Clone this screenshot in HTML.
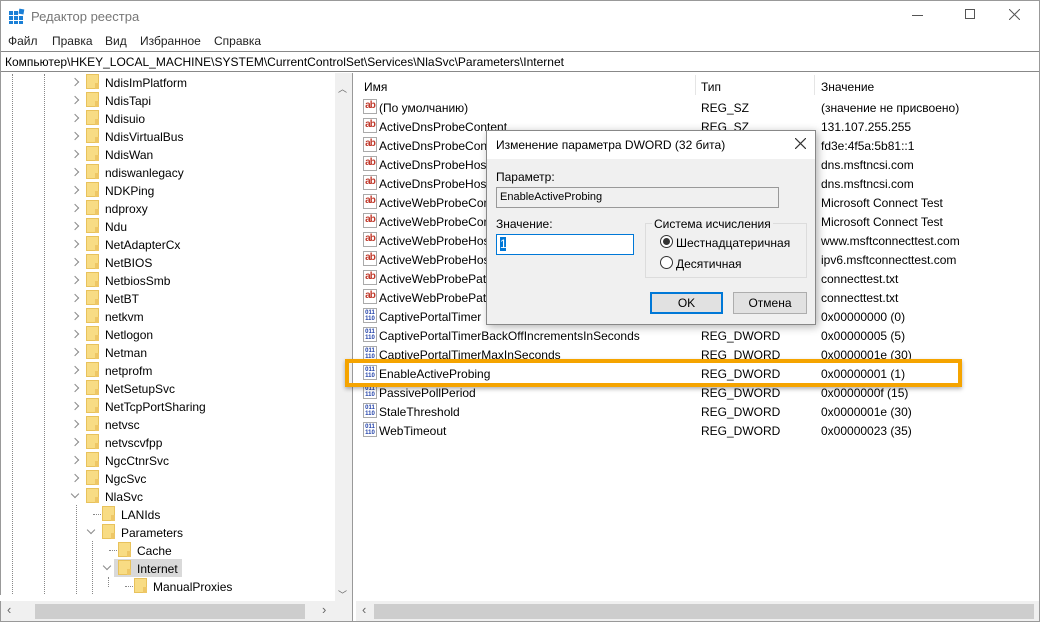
<!DOCTYPE html>
<html><head><meta charset="utf-8"><style>
*{margin:0;padding:0;box-sizing:border-box}
body{width:1040px;height:622px;overflow:hidden;background:#fff;font-family:"Liberation Sans",sans-serif;font-size:12px;color:#000;position:relative}
.a{position:absolute;white-space:nowrap}
.fold{position:absolute;width:13px;height:15px;background:#f8dc84;border:1px solid #e8c25c}
.fold:after{content:"";position:absolute;right:-1px;bottom:-1px;width:4px;height:6px;background:#eec766}
.chev{position:absolute;width:6px;height:6px;border-right:1.5px solid #8a8a8a;border-bottom:1.5px solid #8a8a8a}
.r{transform:rotate(-45deg)}
.d{transform:rotate(45deg)}
.vl{position:absolute;border-left:1px dotted #888;width:0}
.hl{position:absolute;border-top:1px dotted #888;height:0}
.ab{position:absolute;width:14px;height:15px;border:1px solid #aaa;background:#fff;color:#c0392b;font-size:10px;font-weight:bold;line-height:12px;text-align:center;letter-spacing:-1px}
.dw{position:absolute;width:14px;height:15px;border:1px solid #aaa;background:#fff;color:#1f3fa8;font-size:6px;font-weight:bold;line-height:6px;text-align:center;padding-top:1px}
</style></head><body>
<div class="a" style="left:0;top:0;width:1040px;height:622px;border:1px solid #999"></div>
<svg class="a" style="left:9px;top:8px" width="16" height="16"><g fill="#1a7fd6"><rect x="0" y="3" width="4" height="4"/><rect x="5" y="3" width="4" height="4"/><rect x="0" y="8" width="4" height="4"/><rect x="5" y="8" width="4" height="4"/><rect x="10" y="8" width="4" height="4"/><rect x="0" y="13" width="4" height="3"/><rect x="5" y="13" width="4" height="3"/><rect x="10" y="13" width="4" height="3"/><rect x="10" y="1" width="5" height="5" transform="rotate(10 12 3)"/></g></svg>
<div class="a" style="left:31px;top:9px;font-size:13px;color:#777">Редактор реестра</div>
<div class="a" style="left:912px;top:15px;width:11px;border-top:1px solid #555"></div>
<div class="a" style="left:965px;top:9px;width:10px;height:10px;border:1px solid #555"></div>
<svg class="a" style="left:1009px;top:9px" width="11" height="11"><path d="M0 0L11 11M11 0L0 11" stroke="#555" stroke-width="1"/></svg>
<div class="a" style="left:8px;top:34px;color:#222">Файл</div>
<div class="a" style="left:52px;top:34px;color:#222">Правка</div>
<div class="a" style="left:105px;top:34px;color:#222">Вид</div>
<div class="a" style="left:140px;top:34px;color:#222">Избранное</div>
<div class="a" style="left:214px;top:34px;color:#222">Справка</div>
<div class="a" style="left:1px;top:51px;width:1038px;height:21px;border:1px solid #888;border-left:none;border-right:none;background:#fff"></div>
<div class="a" style="left:5px;top:55px">Компьютер\HKEY_LOCAL_MACHINE\SYSTEM\CurrentControlSet\Services\NlaSvc\Parameters\Internet</div>
<div class="a" style="left:1px;top:73px;width:352px;height:548px;border-right:1px solid #999"></div>
<div class="a" style="left:114px;top:559px;width:68px;height:18px;background:#d9d9d9"></div>
<div class="vl" style="left:12px;top:74px;height:528px"></div>
<div class="vl" style="left:44px;top:74px;height:528px"></div>
<div class="vl" style="left:76px;top:505px;height:97px"></div>
<div class="vl" style="left:92px;top:541px;height:61px"></div>
<div class="vl" style="left:108px;top:577px;height:10px"></div>
<div class="hl" style="left:93px;top:514px;width:8px"></div>
<div class="hl" style="left:109px;top:550px;width:8px"></div>
<div class="hl" style="left:125px;top:586px;width:8px"></div>
<div id="tree"></div>
<div class="a" style="left:335px;top:73px;width:17px;height:528px;background:#f0f0f0"></div>
<div class="a" style="left:338px;top:82px;font-size:9px;color:#666">︿</div>
<div class="a" style="left:338px;top:588px;font-size:9px;color:#666">﹀</div>
<div class="a" style="left:1px;top:601px;width:351px;height:20px;background:#f0f0f0"></div>
<div class="a" style="left:35px;top:604px;width:270px;height:15px;background:#cdcdcd"></div>
<div class="a" style="left:7px;top:602px;color:#666;font-size:13px">‹</div>
<div class="a" style="left:322px;top:602px;color:#666;font-size:13px">›</div>
<div class="a" style="left:356px;top:601px;width:683px;height:20px;background:#f0f0f0"></div>
<div class="a" style="left:374px;top:604px;width:660px;height:15px;background:#cdcdcd"></div>
<div class="a" style="left:362px;top:602px;color:#666;font-size:13px">‹</div>
<div class="a" style="left:364px;top:80px">Имя</div>
<div class="a" style="left:695px;top:75px;height:20px;border-left:1px solid #e5e5e5"></div>
<div class="a" style="left:701px;top:80px">Тип</div>
<div class="a" style="left:814px;top:75px;height:20px;border-left:1px solid #e5e5e5"></div>
<div class="a" style="left:821px;top:80px">Значение</div>
<div id="list"></div>
<div class="a" style="left:345px;top:359px;width:617px;height:28px;border:4px solid #f5a400;box-shadow:0 2px 4px rgba(0,0,0,.3)"></div>
<div class="a" style="left:486px;top:130px;width:330px;height:195px;background:#f0f0f0;border:1px solid #888;box-shadow:2px 2px 8px rgba(0,0,0,.3)">
 <div class="a" style="left:0;top:0;width:328px;height:28px;background:#fff"></div>
 <div class="a" style="left:9px;top:7px;font-size:12px">Изменение параметра DWORD (32 бита)</div>
 <svg class="a" style="left:308px;top:7px" width="11" height="11"><path d="M0 0L11 11M11 0L0 11" stroke="#333" stroke-width="1.2"/></svg>
 <div class="a" style="left:9px;top:39px">Параметр:</div>
 <div class="a" style="left:9px;top:56px;width:283px;height:21px;border:1px solid #999;background:#f0f0f0"></div>
 <div class="a" style="left:13px;top:60px;font-size:11px">EnableActiveProbing</div>
 <div class="a" style="left:9px;top:86px">Значение:</div>
 <div class="a" style="left:9px;top:103px;width:138px;height:21px;border:1px solid #0078d7;background:#fff"></div>
 <div class="a" style="left:13px;top:106px;background:#0078d7;color:#fff;height:14px;line-height:14px;width:6px">1</div>
 <div class="a" style="left:158px;top:92px;width:162px;height:55px;border:1px solid #dcdcdc"></div>
 <div class="a" style="left:165px;top:86px;background:#f0f0f0;padding:0 2px">Система исчисления</div>
 <div class="a" style="left:173px;top:104px;width:13px;height:13px;border:1px solid #333;border-radius:50%;background:#fff"></div>
 <div class="a" style="left:176px;top:107px;width:7px;height:7px;border-radius:50%;background:#333"></div>
 <div class="a" style="left:189px;top:105px">Шестнадцатеричная</div>
 <div class="a" style="left:173px;top:125px;width:13px;height:13px;border:1px solid #333;border-radius:50%;background:#fff"></div>
 <div class="a" style="left:189px;top:126px">Десятичная</div>
 <div class="a" style="left:163px;top:161px;width:73px;height:22px;border:2px solid #0078d7;background:#e1e1e1;text-align:center;line-height:18px">OK</div>
 <div class="a" style="left:246px;top:161px;width:74px;height:22px;border:1px solid #adadad;background:#e1e1e1;text-align:center;line-height:20px">Отмена</div>
</div>
<script>
var t=[["NdisImPlatform",0,'r'],["NdisTapi",0,'r'],["Ndisuio",0,'r'],["NdisVirtualBus",0,'r'],["NdisWan",0,'r'],["ndiswanlegacy",0,'r'],["NDKPing",0,'r'],["ndproxy",0,'r'],["Ndu",0,'r'],["NetAdapterCx",0,'r'],["NetBIOS",0,'r'],["NetbiosSmb",0,'r'],["NetBT",0,'r'],["netkvm",0,'r'],["Netlogon",0,'r'],["Netman",0,'r'],["netprofm",0,'r'],["NetSetupSvc",0,'r'],["NetTcpPortSharing",0,'r'],["netvsc",0,'r'],["netvscvfpp",0,'r'],["NgcCtnrSvc",0,'r'],["NgcSvc",0,'r'],["NlaSvc",0,'d'],["LANIds",1,''],["Parameters",1,'d'],["Cache",2,''],["Internet",2,'d'],["ManualProxies",3,''],["Security",1,'r']];
var h='';t.forEach(function(e,i){var y=73+i*18,x=e[1]*16;
if(e[2])h+='<div class="chev '+e[2]+'" style="left:'+(72+x)+'px;top:'+(y+(e[2]=='d'?4:6))+'px"></div>';
h+='<div class="fold" style="left:'+(86+x)+'px;top:'+(y+1)+'px"></div><div class="a" style="left:'+(105+x)+'px;top:'+(y+3)+'px">'+e[0]+'</div>';});
h+='<div class="a" style="left:0;top:595px;width:334px;height:6px;background:#fff"></div>';
document.getElementById('tree').innerHTML=h;
var L=[["(По умолчанию)","REG_SZ","(значение не присвоено)",0],["ActiveDnsProbeContent","REG_SZ","131.107.255.255",0],["ActiveDnsProbeContentV6","REG_SZ","fd3e:4f5a:5b81::1",0],["ActiveDnsProbeHost","REG_SZ","dns.msftncsi.com",0],["ActiveDnsProbeHostV6","REG_SZ","dns.msftncsi.com",0],["ActiveWebProbeContent","REG_SZ","Microsoft Connect Test",0],["ActiveWebProbeContentV6","REG_SZ","Microsoft Connect Test",0],["ActiveWebProbeHost","REG_SZ","www.msftconnecttest.com",0],["ActiveWebProbeHostV6","REG_SZ","ipv6.msftconnecttest.com",0],["ActiveWebProbePath","REG_SZ","connecttest.txt",0],["ActiveWebProbePathV6","REG_SZ","connecttest.txt",0],["CaptivePortalTimer","REG_DWORD","0x00000000 (0)",1],["CaptivePortalTimerBackOffIncrementsInSeconds","REG_DWORD","0x00000005 (5)",1],["CaptivePortalTimerMaxInSeconds","REG_DWORD","0x0000001e (30)",1],["EnableActiveProbing","REG_DWORD","0x00000001 (1)",1],["PassivePollPeriod","REG_DWORD","0x0000000f (15)",1],["StaleThreshold","REG_DWORD","0x0000001e (30)",1],["WebTimeout","REG_DWORD","0x00000023 (35)",1]];
h='';L.forEach(function(e,i){var y=98+i*19;
h+=e[3]?'<div class="dw" style="left:363px;top:'+(y+1)+'px">011<br>110</div>':'<div class="ab" style="left:363px;top:'+(y+1)+'px">ab</div>';
h+='<div class="a" style="left:379px;top:'+(y+3)+'px">'+e[0]+'</div><div class="a" style="left:701px;top:'+(y+3)+'px">'+e[1]+'</div><div class="a" style="left:821px;top:'+(y+3)+'px">'+e[2]+'</div>';});
document.getElementById('list').innerHTML=h;
</script>
</body></html>
